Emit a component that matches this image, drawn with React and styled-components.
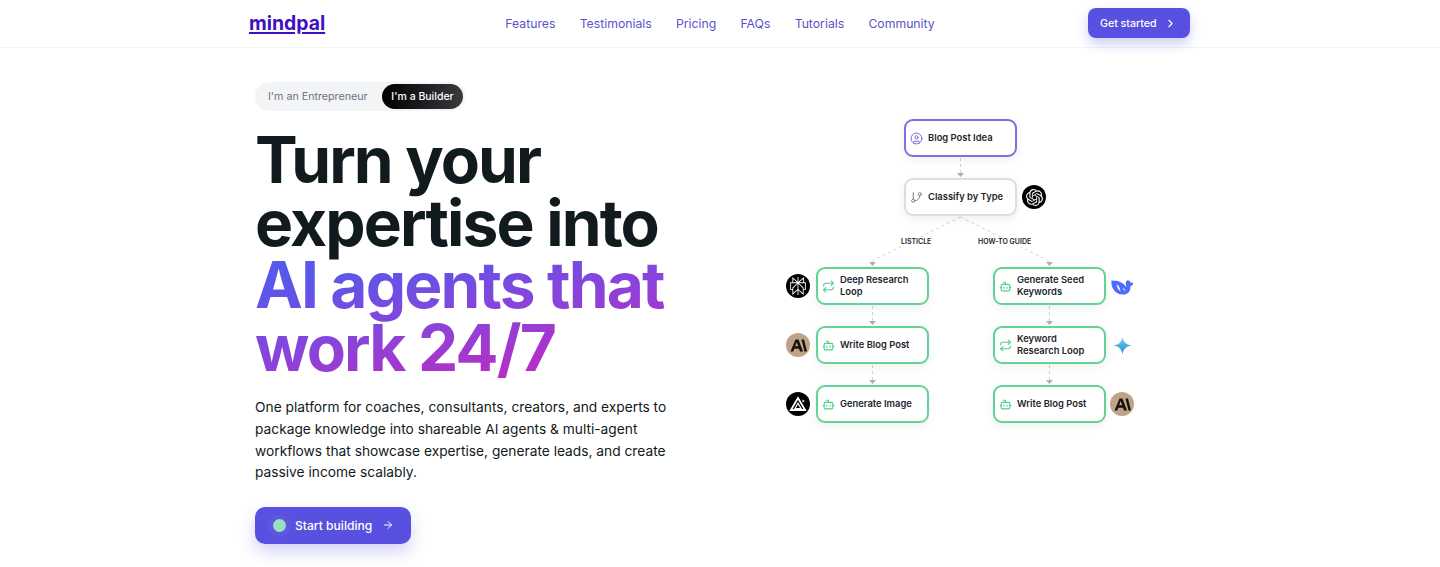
import React from 'react';
import styled, { createGlobalStyle } from 'styled-components';
import { ArrowRight, Bot, ChevronRight, CircleUser, GitBranch, Repeat } from 'lucide-react';
import { SiOpenai, SiPerplexity } from 'react-icons/si';

const GlobalStyle = createGlobalStyle`
    html, body { margin: 0; padding: 0; background: #fff; }
    body { font-family: Inter, "Noto Sans", sans-serif; color: #111a1c; overflow: hidden; }
    * { box-sizing: border-box; }
`;

const Page = styled.div`
    height: 567px;
    overflow: hidden;
    background: #fff;
`;

const Header = styled.header`
    height: 48px;
    border-bottom: 1px solid #f3f4f6;
    display: flex;
    justify-content: center;
`;

const HeaderInner = styled.div`
    width: 941px;
    margin-right: 1px;
    display: flex;
    align-items: center;
    justify-content: space-between;
`;

const Logo = styled.a`
    width: 76px;
    font-size: 19.4px;
    font-weight: 700;
    line-height: 24px;
    color: #3f0fc4;
    text-decoration: underline;
    text-decoration-thickness: 2px;
    text-underline-offset: 2px;
    margin-top: -1px;
`;

const Nav = styled.nav`
    display: flex;
    gap: 24.2px;
    margin-left: 27px;
`;

const NavLink = styled.a`
    font-size: 12.25px;
    font-weight: 400;
    color: #5b54c9;
`;

const HeaderCta = styled.button`
    width: 102px;
    height: 30px;
    border: 0;
    border-radius: 8px;
    background: #5850e0;
    color: #fff;
    font: 500 10.6px Inter, sans-serif;
    display: flex;
    align-items: center;
    gap: 7px;
    padding: 1px 0 0 12px;
    margin-top: -2px;
    box-shadow: 0 6px 12px rgba(88, 80, 230, 0.28);
`;

const Hero = styled.main`
    display: flex;
    justify-content: center;
`;

const HeroInner = styled.div`
    width: 930px;
    display: flex;
    justify-content: space-between;
`;

const Left = styled.section`
    width: 430px;
    padding-top: 34px;
`;

const Toggle = styled.div`
    display: inline-flex;
    align-items: center;
    justify-content: space-between;
    height: 29px;
    width: 210px;
    padding: 0 2px 0 13px;
    border-radius: 15px;
    background: #f3f4f6;
`;

const ToggleLabel = styled.span`
    font-size: 10.7px;
    color: #6b7280;
`;

const ToggleActive = styled.span`
    width: 81px;
    height: 25px;
    border-radius: 13px;
    background: linear-gradient(90deg, #000, #3a3a3f);
    color: #fff;
    font-size: 10.5px;
    font-weight: 500;
    display: flex;
    align-items: center;
    justify-content: center;
`;

const Title = styled.h1`
    margin: 18px 0 0;
    font-size: 64px;
    font-weight: 700;
    line-height: 62.6px;
    letter-spacing: -1.85px;
    color: #111a1c;
    white-space: nowrap;
`;

const Gradient = styled.span`
    background: linear-gradient(168deg, #5858ea 15%, #8d42d8 52%, #b62ec6 80%);
    -webkit-background-clip: text;
    background-clip: text;
    color: transparent;
    display: inline-block;
    padding-bottom: 6px;
    margin-bottom: -6px;
`;

const Lead = styled.p`
    margin: 18px 0 0;
    width: 420px;
    font-size: 13.75px;
    line-height: 21.6px;
    color: #111a1c;
`;

const StartButton = styled.button`
    margin-top: 23px;
    width: 156px;
    height: 37px;
    border: 0;
    border-radius: 10px;
    background: #5850e0;
    color: #fff;
    font: 500 12.1px Inter, sans-serif;
    display: flex;
    align-items: center;
    padding: 0 0 0 18px;
    box-shadow: 0 8px 16px rgba(88, 80, 230, 0.25);
`;

const Dot = styled.span`
    width: 13px;
    height: 13px;
    border-radius: 50%;
    background: #95e3bf;
    margin-right: 9px;
    box-shadow: 0 0 0 5px rgba(255, 255, 255, 0.04);
`;

const StartLabel = styled.span`
    margin-right: 10px;
`;

const Canvas = styled.div`
    position: relative;
    width: 360px;
    height: 320px;
    margin-top: 67px;
    margin-right: 45px;
`;

const Wires = styled.svg`
    position: absolute;
    inset: 0;
`;

const NODE_COLORS = { purple: '#7a72e0', grey: '#dcdde0', green: '#62d394' };
const ICON_COLORS = { purple: '#6f66dc', grey: '#7b7f86', green: '#4fd08a' };

const Node = styled.div`
    position: absolute;
    left: ${props => props.$x}px;
    top: ${props => props.$y}px;
    width: 113px;
    height: 38px;
    background: #fff;
    border: 2px solid ${props => NODE_COLORS[props.$tone]};
    border-radius: 9px;
    box-shadow: 0 3px 8px rgba(17, 26, 28, 0.07);
    display: flex;
    align-items: center;
    gap: 5px;
    padding-left: 4px;
    svg { color: ${props => ICON_COLORS[props.$tone]}; flex: none; }
`;

const NodeLabel = styled.span`
    font-size: 9.4px;
    font-weight: 600;
    line-height: 12px;
    color: #23262b;
`;

const EdgeLabel = styled.span`
    position: absolute;
    left: ${props => props.$x}px;
    top: ${props => props.$y}px;
    font-size: 7px;
    font-weight: 600;
    line-height: 10px;
    color: #23262b;
    background: #fff;
    white-space: nowrap;
`;

const Badge = styled.div`
    position: absolute;
    left: ${props => props.$x}px;
    top: ${props => props.$y}px;
    width: 24px;
    height: 24px;
    border-radius: 50%;
    background: ${props => props.$bg};
    color: ${props => props.$fg};
    display: flex;
    align-items: center;
    justify-content: center;
`;

const AnthropicMark = () => (
    <svg width="17" height="13" viewBox="0 0 34 26" fill="#14110f">
        <path d="M11 1h6l9 24h-6l-2-5.5H8.5L6.5 25H1zM10.3 14.5h6L13.3 6z" fillRule="evenodd" />
        <path d="M23 1h5l6 24h-5z" />
    </svg>
);

const PrismMark = () => (
    <svg width="18" height="18" viewBox="0 0 24 24" fill="none" stroke="#fff">
        <path d="M12 4 2.5 20h19z" strokeWidth="2.4" strokeLinejoin="miter" />
        <path d="M12 11 8 18h8z" strokeWidth="1.6" />
        <path d="M18 6l3 2-3 2z" fill="#fff" stroke="none" />
    </svg>
);

const WhaleMark = () => (
    <svg width="24" height="19" viewBox="0 0 32 25">
        <path fill="#4d6bfe" d="M2 4C1 12 5 22 16 23c8 1 12-5 11-11 2 0 4-2 4-5-2 1-4 0-5-2-2-2-5-1-5 3 0 2 1 4 1 5-2-3-7-7-12-8-3-.5-6 0-8-1z" />
        <path fill="#fff" d="M9 9c3 3 5 6 5 10-3-2-5-6-5-10zM17 14c2 1 3 3 4 4-2 0-4-2-4-4z" />
    </svg>
);

const SparkMark = () => (
    <svg width="19" height="19" viewBox="0 0 24 24">
        <defs>
            <linearGradient id="spark" x1="0" y1="0" x2="0.2" y2="1">
                <stop offset="0" stopColor="#b4d9f6" />
                <stop offset="0.55" stopColor="#4bb0e2" />
                <stop offset="1" stopColor="#1a9bd2" />
            </linearGradient>
        </defs>
        <path fill="url(#spark)" d="M12 1c1 6.5 4.5 10 11 11-6.5 1-10 4.5-11 11-1-6.5-4.5-10-11-11 6.5-1 10-4.5 11-11z" />
    </svg>
);

const nodes = [
    { x: 124, y: 4, tone: 'purple', Icon: CircleUser, label: 'Blog Post Idea' },
    { x: 124, y: 63, tone: 'grey', Icon: GitBranch, label: 'Classify by Type' },
    { x: 36, y: 152, tone: 'green', Icon: Repeat, label: <>Deep Research<br />Loop</> },
    { x: 36, y: 211, tone: 'green', Icon: Bot, label: 'Write Blog Post' },
    { x: 36, y: 270, tone: 'green', Icon: Bot, label: 'Generate Image' },
    { x: 213, y: 152, tone: 'green', Icon: Bot, label: <>Generate Seed<br />Keywords</> },
    { x: 213, y: 211, tone: 'green', Icon: Repeat, label: <>Keyword<br />Research Loop</> },
    { x: 213, y: 270, tone: 'green', Icon: Bot, label: 'Write Blog Post' },
];

const badges = [
    { x: 242, y: 70, bg: '#000', fg: '#fff', mark: <SiOpenai size={17} /> },
    { x: 6, y: 159, bg: '#000', fg: '#fff', mark: <SiPerplexity size={18} /> },
    { x: 6, y: 218, bg: '#bfa386', fg: '#14110f', mark: <AnthropicMark /> },
    { x: 6, y: 277, bg: '#000', fg: '#fff', mark: <PrismMark /> },
    { x: 330, y: 159, bg: 'transparent', fg: '#4d6bfe', mark: <WhaleMark /> },
    { x: 330, y: 218, bg: 'transparent', fg: '#2aa5dc', mark: <SparkMark /> },
    { x: 330, y: 277, bg: '#bfa386', fg: '#14110f', mark: <AnthropicMark /> },
];

// dashed connectors; each one ends in a small arrow head
const wires = [
    'M180.5 43 V58',
    'M180.5 102 L92 146',
    'M180.5 102 L269 146',
    'M92.5 191 V206',
    'M92.5 250 V265',
    'M269.5 191 V206',
    'M269.5 250 V265',
];

const heads = [[180.5, 63], [92.5, 152], [269.5, 152], [92.5, 211], [92.5, 270], [269.5, 211], [269.5, 270]];

const Diagram = () => (
    <Canvas>
        <Wires width="360" height="320">
            {wires.map(d => (
                <path key={d} d={d} fill="none" stroke="#d0d2d6" strokeWidth="1" strokeDasharray="3 3" />
            ))}
            {heads.map(([x, y]) => (
                <path key={`${x}-${y}`} d={`M${x - 3.5} ${y - 5} h7 L${x} ${y - 1}z`} fill="#adafb3" />
            ))}
        </Wires>
        <EdgeLabel $x={121} $y={122}>LISTICLE</EdgeLabel>
        <EdgeLabel $x={198} $y={122}>HOW-TO GUIDE</EdgeLabel>
        {nodes.map(({ x, y, tone, Icon, label }) => (
            <Node key={`${x}-${y}`} $x={x} $y={y} $tone={tone}>
                <Icon size={13} strokeWidth={tone === 'green' ? 2 : 1.8} />
                <NodeLabel>{label}</NodeLabel>
            </Node>
        ))}
        {badges.map(({ x, y, bg, fg, mark }) => (
            <Badge key={`${x}-${y}`} $x={x} $y={y} $bg={bg} $fg={fg}>{mark}</Badge>
        ))}
    </Canvas>
);

export default function App() {
    return (
        <Page>
            <GlobalStyle />
            <Header>
                <HeaderInner>
                    <Logo>mindpal</Logo>
                    <Nav>
                        {['Features', 'Testimonials', 'Pricing', 'FAQs', 'Tutorials', 'Community'].map(item => (
                            <NavLink key={item}>{item}</NavLink>
                        ))}
                    </Nav>
                    <HeaderCta>Get started <ChevronRight size={13} /></HeaderCta>
                </HeaderInner>
            </Header>
            <Hero>
                <HeroInner>
                    <Left>
                        <Toggle>
                            <ToggleLabel>I'm an Entrepreneur</ToggleLabel>
                            <ToggleActive>I'm a Builder</ToggleActive>
                        </Toggle>
                        <Title>
                            Turn your<br />expertise into<br />
                            <Gradient>AI agents that<br />work 24/7</Gradient>
                        </Title>
                        <Lead>
                            One platform for coaches, consultants, creators, and experts to package knowledge into shareable AI agents &amp; multi-agent workflows that showcase expertise, generate leads, and create passive income scalably.
                        </Lead>
                        <StartButton>
                            <Dot />
                            <StartLabel>Start building</StartLabel>
                            <ArrowRight size={12} />
                        </StartButton>
                    </Left>
                    <Diagram />
                </HeroInner>
            </Hero>
        </Page>
    );
}
